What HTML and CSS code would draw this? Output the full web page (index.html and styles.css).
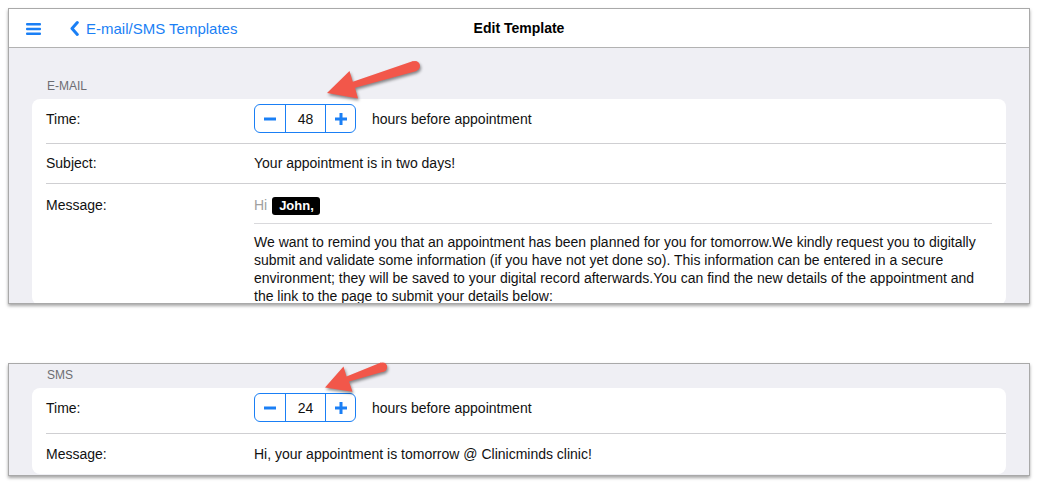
FILE: index.html
```html
<!doctype html>
<html>
<head>
	<meta charset="utf-8">
	<title>Edit Template</title>
	<link rel="stylesheet" href="styles.css">
</head>
<body>
	<div class="shot shot-email">
		<header class="navbar">
			<div class="nav-left">
				<svg class="menu-icon" width="15" height="12" viewBox="0 0 15 12">
					<rect x="0" y="0" width="15" height="2.5" rx="1"/>
					<rect x="0" y="4.75" width="15" height="2.5" rx="1"/>
					<rect x="0" y="9.5" width="15" height="2.5" rx="1"/>
				</svg>
				<a class="back" href="#">
					<svg class="chevron" width="9" height="15" viewBox="0 0 9 15">
						<path d="M7.3 1.6 L2 7.5 L7.3 13.4" fill="none" stroke-width="3" stroke-linecap="round" stroke-linejoin="round"/>
					</svg>
					E-mail/SMS Templates
				</a>
			</div>
			<div class="nav-title">Edit Template</div>
			<div></div>
		</header>
		<div class="content">
			<div class="section-label">E-MAIL</div>
			<div class="card">
				<div class="row row-time">
					<div class="label">Time:</div>
					<div class="value value-time">
						<div class="stepper">
							<button class="step step-minus"><svg width="12" height="12" viewBox="0 0 12 12"><path d="M0 6 H12"/></svg></button>
							<span class="step-num">48</span>
							<button class="step step-plus"><svg width="12" height="12" viewBox="0 0 12 12"><path d="M0 6 H12 M6 0 V12"/></svg></button>
						</div>
						<span>hours before appointment</span>
					</div>
				</div>
				<div class="row row-text">
					<div class="label">Subject:</div>
					<div class="value">Your appointment is in two days!</div>
				</div>
				<div class="row row-message">
					<div class="label">Message:</div>
					<div class="value">
						<div class="greeting"><span class="hi">Hi</span> <span class="tag">John,</span></div>
						<p class="body-text">We want to remind you that an appointment has been planned for you for tomorrow.We kindly request you to digitally submit and validate some information (if you have not yet done so). This information can be entered in a secure environment; they will be saved to your digital record afterwards.You can find the new details of the appointment and the link to the page to submit your details below:</p>
					</div>
				</div>
			</div>
		</div>
	</div>

	<div class="shot shot-sms">
		<div class="content">
			<div class="section-label">SMS</div>
			<div class="card">
				<div class="row row-time">
					<div class="label">Time:</div>
					<div class="value value-time">
						<div class="stepper">
							<button class="step step-minus"><svg width="12" height="12" viewBox="0 0 12 12"><path d="M0 6 H12"/></svg></button>
							<span class="step-num">24</span>
							<button class="step step-plus"><svg width="12" height="12" viewBox="0 0 12 12"><path d="M0 6 H12 M6 0 V12"/></svg></button>
						</div>
						<span>hours before appointment</span>
					</div>
				</div>
				<div class="row row-text">
					<div class="label">Message:</div>
					<div class="value">Hi, your appointment is tomorrow @ Clinicminds clinic!</div>
				</div>
			</div>
		</div>
	</div>

	<svg class="arrows" width="1040" height="485" viewBox="0 0 1040 485">
		<g class="arrow">
			<polygon points="327,93 358,98.5 355,87.8 416.8,71 413.2,61 352.8,81.8 349.5,71"/>
			<circle cx="415" cy="66" r="5"/>
		</g>
		<g class="arrow">
			<polygon points="325,387.5 352.5,391.8 349,381.6 384,371.6 381,362.6 346.5,376.4 343.5,366.5"/>
			<circle cx="382.5" cy="367.1" r="4.7"/>
		</g>
	</svg>
</body>
</html>
```

FILE: styles.css
```css
html, body {
	margin: 0;
	background: #fff;
}
body {
	padding: 8px 10px 0 8px;
	font-family: "Liberation Sans", Helvetica, Arial, sans-serif;
	font-size: 14px;
	color: #111;
	position: relative;
	width: 1040px;
	height: 485px;
	box-sizing: border-box;
}

.shot {
	width: 1022px;
	box-sizing: border-box;
	border: 1px solid #a9a9a9;
	background: #efeff4;
	box-shadow: 0 2px 3px rgba(0, 0, 0, 0.35);
	overflow: hidden;
}
.shot-email {
	height: 296px;
}
.shot-sms {
	height: 113px;
	margin-top: 59px;
}

/* top bar */
.navbar {
	display: grid;
	grid-template-columns: 1fr auto 1fr;
	align-items: center;
	height: 38px;
	background: #fff;
	border-bottom: 1px solid #b2b2b2;
}
.nav-left {
	display: flex;
	align-items: center;
	padding-left: 17px;
}
.menu-icon {
	fill: #1a7ff5;
	margin-top: 1px;
}
.back {
	display: flex;
	align-items: center;
	gap: 7px;
	margin-left: 29px;
	color: #1a7ff5;
	font-size: 15px;
	text-decoration: none;
}
.chevron {
	stroke: #1a7ff5;
}
.nav-title {
	font-weight: bold;
	font-size: 14px;
	color: #000;
}

/* grouped list */
.content {
	padding: 31px 23px 0 23px;
}
.shot-sms .content {
	padding-top: 4px;
}
.section-label {
	padding-left: 15px;
	font-size: 12px;
	line-height: 14px;
	color: #6d6d72;
	margin-bottom: 6px;
}
.card {
	background: #fff;
	border-radius: 8px;
	padding-left: 14px;
}
.row {
	display: flex;
	border-bottom: 1px solid #cfcfd2;
}
.row:last-child {
	border-bottom: 0;
}
.label {
	width: 208px;
	flex: none;
}
.value {
	flex: 1;
	padding-right: 14px;
}

.row-time {
	align-items: center;
	padding: 5px 0 10px;
}
.shot-sms .row-time {
	padding-bottom: 11px;
}
.value-time {
	display: flex;
	align-items: center;
	gap: 16px;
}
.row-text {
	padding: 11px 0;
	line-height: 17px;
}
.shot-sms .row-text {
	padding-top: 12px;
}
.row-message {
	padding-top: 11px;
	line-height: 18px;
}
.row-message .label {
	padding-top: 1px;
}

/* stepper */
.stepper {
	display: flex;
	height: 29px;
	box-sizing: border-box;
	border: 1px solid #1a7ff5;
	border-radius: 6px;
}
.step {
	display: flex;
	align-items: center;
	justify-content: center;
	padding: 0;
	border: 0;
	background: transparent;
}
.step svg {
	stroke: #1a7ff5;
	stroke-width: 3;
}
.step-minus {
	width: 30px;
}
.step-plus {
	width: 29px;
}
.step-num {
	width: 39px;
	display: flex;
	align-items: center;
	justify-content: center;
	border-left: 1px solid #1a7ff5;
	border-right: 1px solid #1a7ff5;
}

/* message */
.greeting {
	padding-bottom: 8px;
	border-bottom: 1px solid #d9d9dc;
	line-height: 20px;
}
.hi {
	color: #a0a0a0;
}
.tag {
	display: inline-block;
	background: #000;
	color: #fff;
	font-weight: bold;
	font-size: 13px;
	line-height: 18px;
	padding: 0 6px 0 7px;
	border-radius: 3px;
	margin-left: 1px;
}
.body-text {
	margin: 9px 0 0;
	line-height: 18px;
}

/* annotation arrows */
.arrows {
	position: absolute;
	left: 0;
	top: 0;
	pointer-events: none;
}
.arrow {
	fill: #f2574a;
	filter: drop-shadow(1px 2px 1.5px rgba(0, 0, 0, 0.45));
}
```
